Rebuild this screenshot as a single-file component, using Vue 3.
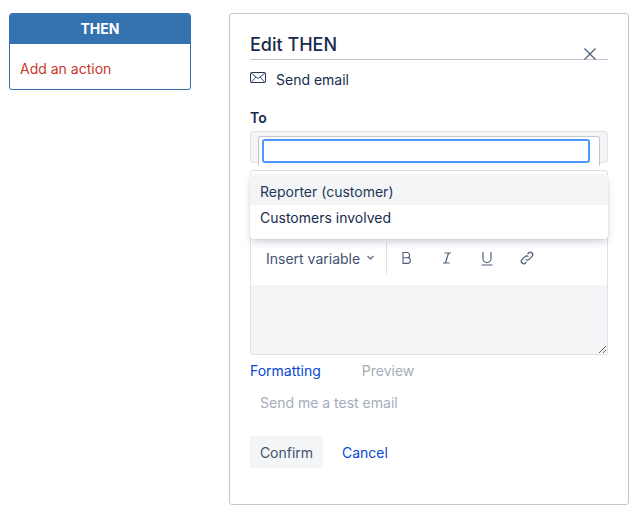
<template>
  <div class="page">
    <section class="then-card">
      <header class="then-head">THEN</header>
      <div class="then-body"><a class="add-action">Add an action</a></div>
    </section>

    <section class="panel">
      <div class="title-row">
        <h2>Edit THEN</h2>
        <svg class="close" width="14" height="14" viewBox="0 0 14 14">
          <path d="M1.5 1.5l11 11M12.5 1.5l-11 11" stroke="#505f79" stroke-width="1.3" fill="none" />
        </svg>
      </div>

      <div class="action-row">
        <svg width="16" height="12" viewBox="0 0 16 12">
          <rect x="0.5" y="0.5" width="15" height="10" rx="1" fill="none" stroke="#253858" />
          <path d="M1 1l7 5.5L15 1M1 10.5l5-5.5M15 10.5l-5-5.5" fill="none" stroke="#253858" stroke-width="0.9" />
        </svg>
        <span>Send email</span>
      </div>

      <label class="to-label">To</label>
      <div class="picker">
        <div class="picker-field">
          <div class="picker-inner">
            <input class="picker-input" type="text" />
          </div>
        </div>

        <div class="editor">
          <div class="toolbar">
            <span class="insert">Insert variable</span>
            <svg class="chevron" width="9" height="6" viewBox="0 0 9 6">
              <path d="M1.5 1l3 3 3-3" fill="none" stroke="#6b778c" stroke-width="1.5" />
            </svg>
            <span class="divider"></span>
            <span class="tool">
              <svg width="14" height="14" viewBox="0 0 14 14" fill="none" stroke="#505f79" stroke-width="1.1">
                <path d="M3 1.5h4a2.6 2.6 0 010 5.3H3zM3 6.8h4.6a2.8 2.8 0 010 5.6H3z" />
              </svg>
            </span>
            <span class="tool">
              <svg width="14" height="14" viewBox="0 0 14 14" fill="none" stroke="#505f79" stroke-width="1.2">
                <path d="M4.5 2h6.5M3 12h6.5M8.6 2L5.4 12" />
              </svg>
            </span>
            <span class="tool">
              <svg width="14" height="15" viewBox="0 0 14 15" fill="none" stroke="#505f79" stroke-width="1.2">
                <path d="M3 1v6.5a4 4 0 008 0V1M1.5 14h11" />
              </svg>
            </span>
            <span class="tool">
              <svg width="16" height="16" viewBox="0 0 16 16" fill="none" stroke="#505f79" stroke-width="1.3">
                <path d="M6.6 9.4a2.4 2.4 0 003.4 0l3-3A2.4 2.4 0 009.6 3L8.5 4.1" />
                <path d="M9.4 6.6a2.4 2.4 0 00-3.4 0l-3 3A2.4 2.4 0 006.4 13l1.1-1.1" />
              </svg>
            </span>
          </div>
          <textarea class="body-input"></textarea>
        </div>

        <ul class="menu">
          <li class="active">Reporter (customer)</li>
          <li>Customers involved</li>
        </ul>
      </div>

      <div class="tabs">
        <a class="link">Formatting</a>
        <span class="muted">Preview</span>
      </div>

      <div class="test-email">Send me a test email</div>

      <div class="actions">
        <button type="button" class="confirm">Confirm</button>
        <a class="link cancel">Cancel</a>
      </div>
    </section>
  </div>
</template>

<script setup>
</script>

<style>
html,
body {
  background: #fff;
}
</style>

<style scoped>
.page {
  display: flex;
  align-items: flex-start;
  gap: 38px;
  padding: 13px 0 0 9px;
  font-family: Inter, "Liberation Sans", sans-serif;
  font-size: 14px;
  color: #172b4d;
}

.then-card {
  width: 182px;
  box-sizing: border-box;
  border: 1px solid #3572b0;
  border-radius: 3px;
  overflow: hidden;
}

.then-head {
  height: 30px;
  line-height: 30px;
  background: #3572b0;
  color: #fff;
  font-weight: 700;
  font-size: 14px;
  text-align: center;
}

.then-body {
  height: 45px;
  padding: 0 10px;
  line-height: 50px;
}

.add-action {
  color: #c9372c;
}

.panel {
  width: 400px;
  height: 492px;
  box-sizing: border-box;
  padding: 19px 20px 0;
  border: 1px solid #c7c7c7;
  border-radius: 3px;
}

.title-row {
  position: relative;
  height: 26px;
  border-bottom: 1px solid #c1c7d0;
}

.title-row h2 {
  margin: 0;
  font-size: 18px;
  font-weight: 500;
  line-height: 24px;
}

.close {
  position: absolute;
  right: 11px;
  top: 14px;
}

.action-row {
  display: flex;
  align-items: center;
  gap: 10px;
  height: 20px;
  margin-top: 9px;
}

.action-row svg {
  margin-top: -3px;
}

.to-label {
  display: block;
  margin-top: 19px;
  font-weight: 600;
  line-height: 20px;
}

.picker {
  position: relative;
  margin-top: 3px;
}

.picker-field {
  height: 32px;
  box-sizing: border-box;
  background: #f4f5f7;
  border: 1px solid #dfe1e6;
  border-radius: 3px;
  padding: 4px 7px 0;
}

.picker-inner {
  height: 30px;
  box-sizing: border-box;
  background: #fff;
  border: 1px solid #c1c7d0;
  border-bottom: 0;
  border-radius: 3px 3px 0 0;
  padding: 2px 9px 0 3px;
  position: relative;
}

.picker-input {
  display: block;
  width: 100%;
  height: 24px;
  box-sizing: border-box;
  border: 2px solid #4c9aff;
  border-radius: 3px;
  outline: none;
  background: #fff;
}

.editor {
  margin-top: 7px;
  box-sizing: border-box;
  border: 1px solid #dfe1e6;
  border-radius: 3px;
  height: 185px;
  display: flex;
  flex-direction: column;
}

.toolbar {
  height: 114px;
  flex: none;
  box-sizing: border-box;
  padding: 60px 0 0 15px;
  display: flex;
  align-items: center;
  color: #42526e;
}

.insert {
  width: 100px;
  white-space: nowrap;
}

.chevron {
  flex: none;
}

.divider {
  width: 1px;
  height: 32px;
  background: #dfe1e6;
  margin: 0 0 0 11px;
}

.tool {
  width: 40px;
  display: flex;
  justify-content: center;
}

.body-input {
  flex: 1;
  display: block;
  border: 0;
  outline: none;
  background: #f4f5f7;
  border-radius: 0 0 3px 3px;
  resize: vertical;
}

.menu {
  position: absolute;
  left: 0;
  right: 0;
  top: 44px;
  margin: 0;
  padding: 0 0 8px;
  list-style: none;
  background: #fff;
  border-radius: 3px;
  box-shadow: 0 4px 8px -2px rgba(9, 30, 66, 0.25), 0 0 1px rgba(9, 30, 66, 0.31);
}

.menu li {
  height: 26px;
  line-height: 26px;
  padding: 0 10px;
}

.menu li.active {
  height: 30px;
  line-height: 33px;
  background: #f4f5f7;
  color: #253858;
}

.tabs {
  display: flex;
  gap: 41px;
  margin-top: 6px;
  line-height: 20px;
}

.link {
  color: #0747d6;
}

.muted {
  color: #a5adba;
}

.test-email {
  margin-top: 12px;
  padding-left: 10px;
  line-height: 20px;
  color: #a5adba;
}

.actions {
  display: flex;
  align-items: center;
  gap: 19px;
  margin-top: 23px;
}

.confirm {
  width: 73px;
  height: 32px;
  padding: 0;
  border: 0;
  border-radius: 3px;
  background: #f4f5f7;
  color: #42526e;
  font: inherit;
}
</style>
